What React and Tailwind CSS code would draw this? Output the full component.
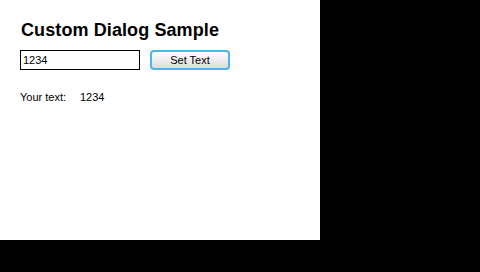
export default function App() {
  return (
    <div className="w-[480px] h-[272px] bg-black overflow-hidden">
      <div className="w-[320px] h-[240px] bg-white pl-[20px] pt-[19px] text-black">
        <h1 className="text-[18px] leading-[22px] font-bold font-['Liberation_Sans',Arial,sans-serif] pl-px tracking-[0.1px]">Custom Dialog Sample</h1>
        <div className="flex items-center mt-[9px] gap-[10px]">
          <div className="w-[120px] h-[20px] border border-black flex items-center pl-[2px] text-[11px] font-['Liberation_Sans',Arial,sans-serif] leading-none">1234</div>
          <button className="w-[80px] h-[20px] rounded-[4px] border-2 border-[#4fb4e6] bg-gradient-to-b from-white to-[#dcdcdc] flex items-center justify-center text-[11px] font-['Liberation_Sans',Arial,sans-serif] leading-none">Set Text</button>
        </div>
        <div className="flex mt-[20px] text-[11px] font-['Liberation_Sans',Arial,sans-serif] leading-[14px]">
          <span className="w-[60px]">Your text:</span>
          <span>1234</span>
        </div>
      </div>
    </div>
  );
}
